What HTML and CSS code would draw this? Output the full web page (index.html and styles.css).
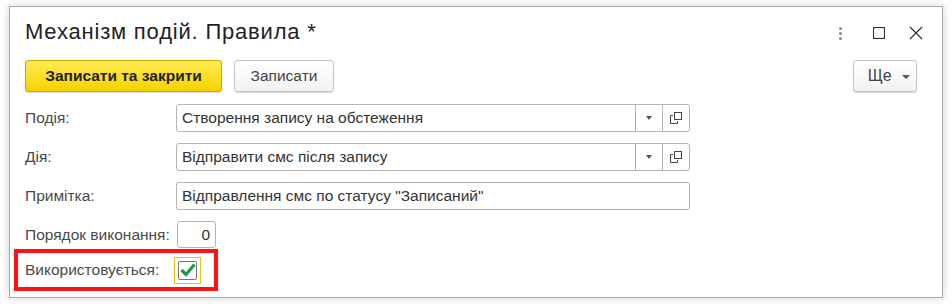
FILE: index.html
```html
<!DOCTYPE html>
<html>
  <head>
    <title>Механізм подій. Правила</title>
    <link rel="stylesheet" href="styles.css">
  </head>
  <body>
    <div class="window">
      <div class="titlebar">
        <h1 class="title">Механізм подій. Правила *</h1>
        <div class="win-icons">
          <span class="dots"><i></i><i></i><i></i></span>
          <svg class="win-icon" width="12" height="12" viewBox="0 0 12 12">
            <rect x="0.5" y="0.5" width="11" height="11" fill="none" stroke="#333" stroke-width="1.2" />
          </svg>
          <svg class="win-icon win-close" width="14" height="14" viewBox="0 0 14 14">
            <path d="M1 1 L13 13 M13 1 L1 13" stroke="#333" stroke-width="1.3" fill="none" />
          </svg>
        </div>
      </div>

      <div class="toolbar">
        <button class="btn btn-primary">Записати та закрити</button>
        <button class="btn btn-save">Записати</button>
        <span class="spacer"></span>
        <button class="btn btn-more">Ще <span class="caret"></span></button>
      </div>

      <div class="form">
        <div class="row">
          <label class="label">Подія:</label>
          <div class="field field-wide">
            <span class="value">Створення запису на обстеження</span>
            <span class="field-btn"><span class="caret"></span></span>
            <span class="field-btn">
              <svg width="12" height="12" viewBox="0 0 12 12">
                <rect x="4.5" y="0.5" width="7" height="7" fill="none" stroke="#444" />
                <path d="M3 3.5 H0.5 V11.5 H7.5 V9" fill="none" stroke="#444" />
              </svg>
            </span>
          </div>
        </div>

        <div class="row">
          <label class="label">Дія:</label>
          <div class="field field-wide">
            <span class="value">Відправити смс після запису</span>
            <span class="field-btn"><span class="caret"></span></span>
            <span class="field-btn">
              <svg width="12" height="12" viewBox="0 0 12 12">
                <rect x="4.5" y="0.5" width="7" height="7" fill="none" stroke="#444" />
                <path d="M3 3.5 H0.5 V11.5 H7.5 V9" fill="none" stroke="#444" />
              </svg>
            </span>
          </div>
        </div>

        <div class="row">
          <label class="label">Примітка:</label>
          <div class="field field-wide">
            <span class="value">Відправлення смс по статусу "Записаний"</span>
          </div>
        </div>

        <div class="row">
          <label class="label">Порядок виконання:</label>
          <div class="field field-num">
            <span class="value">0</span>
          </div>
        </div>

        <div class="row row-marked">
          <label class="label">Використовується:</label>
          <span class="check-focus">
            <span class="checkbox">
              <svg width="16" height="14" viewBox="0 0 16 14">
                <path d="M1.5 7 L6 11.5 L14.5 1.5" fill="none" stroke="#1a9a45" stroke-width="3.2" />
              </svg>
            </span>
          </span>
        </div>
      </div>
    </div>
  </body>
</html>
```

FILE: styles.css
```css
body {
  margin: 0;
  padding: 6px 9px;
  background-color: #fff;
  font-family: "Liberation Sans", Arial, sans-serif;
}

.window {
  width: 932px;
  height: 290px;
  border: 1px solid #a8a8a8;
  background-color: #fff;
  box-shadow: 0 0 9px rgba(0, 0, 0, 0.18);
}

.titlebar {
  display: flex;
  align-items: center;
  padding: 13px 19px 0 15px;
}

.title {
  flex: 1;
  margin: 0;
  font-size: 22px;
  font-weight: normal;
  letter-spacing: 0.8px;
  line-height: 24px;
  color: #222;
}

.win-icons {
  display: flex;
  align-items: center;
  margin-top: 2px;
}

.dots {
  display: flex;
  flex-direction: column;
  gap: 2px;
  margin-right: 31px;
}

.dots i {
  display: block;
  width: 3px;
  height: 3px;
  border-radius: 50%;
  background-color: #888;
}

.win-icon {
  display: block;
}

.win-close {
  margin-left: 24px;
}

.toolbar {
  display: flex;
  align-items: center;
  gap: 12px;
  padding: 16px 25px 0 15px;
}

.spacer {
  flex: 1;
}

.btn {
  height: 32px;
  padding: 0 17px;
  border: 1px solid #c2c2c2;
  border-radius: 3px;
  background: linear-gradient(#ffffff, #f2f2f2);
  box-shadow: 0 1px 1px rgba(0, 0, 0, 0.15);
  font-family: "Liberation Sans", Arial, sans-serif;
  font-size: 15.5px;
  color: #444;
}

.btn-primary {
  width: 197px;
  padding: 0;
  border-color: #c9a900;
  background: linear-gradient(#ffeb52, #f7d200);
  font-weight: bold;
  font-size: 15.5px;
  color: #222;
}

.btn-save {
  width: 100px;
  padding: 0;
}

.btn-more {
  width: 64px;
  padding: 0 0 0 8px;
  font-size: 16px;
  text-align: center;
}

.caret {
  display: inline-block;
  width: 0;
  height: 0;
  border-left: 4px solid transparent;
  border-right: 4px solid transparent;
  border-top: 4px solid #555;
  vertical-align: middle;
  margin-left: 6px;
}

.form {
  display: flex;
  flex-direction: column;
  gap: 11px;
  padding: 12px 0 0 15px;
}

.row {
  display: flex;
  align-items: center;
}

.label {
  width: 151px;
  font-size: 15.5px;
  color: #4a4a4a;
}

.field {
  display: flex;
  align-items: stretch;
  height: 26px;
  border: 1px solid #b5b5b5;
  border-radius: 3px;
  background-color: #fff;
}

.field-wide {
  width: 512px;
}

.field-num {
  width: 37px;
  height: 25px;
  margin-left: 1px;
  justify-content: flex-end;
}

.value {
  flex: 1;
  padding: 0 5px;
  font-size: 15.5px;
  line-height: 26px;
  color: #333;
  white-space: nowrap;
}

.field-num .value {
  flex: none;
  line-height: 25px;
}

.field-btn {
  display: flex;
  align-items: center;
  justify-content: center;
  width: 26px;
  border-left: 1px solid #b5b5b5;
}

.field-btn .caret {
  margin: 0;
  border-width: 4px 3.5px 0;
}

.row-marked {
  width: 189px;
  height: 34px;
  margin: -10px 0 0 -11px;
  padding-left: 7px;
  border: 4px solid #ff1010;
}

.row-marked .label {
  width: 149px;
}

.check-focus {
  display: flex;
  align-items: center;
  justify-content: center;
  width: 25px;
  height: 25px;
  border: 1px solid #f0c400;
}

.checkbox {
  display: flex;
  align-items: center;
  justify-content: center;
  width: 17px;
  height: 17px;
  border: 1px solid #777;
  border-radius: 2px;
}
```
